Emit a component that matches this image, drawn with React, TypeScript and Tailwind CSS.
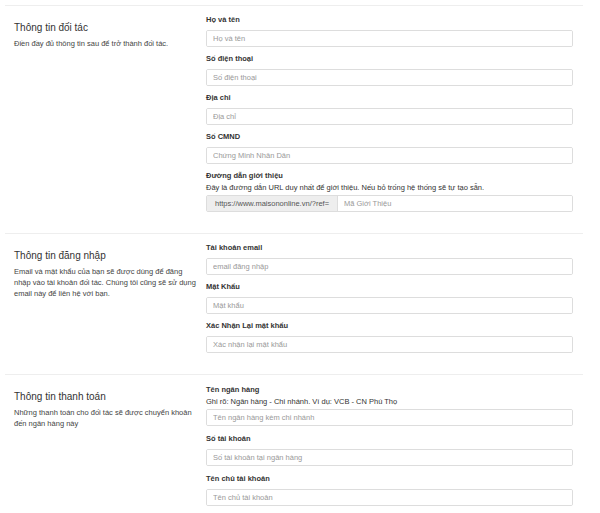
import React from "react";

type Field = {
  label: string;
  placeholder: string;
  help?: string;
  addon?: string;
};

type SectionProps = {
  title: string;
  desc: React.ReactNode;
  fields: Field[];
  wide?: boolean;
};

function FieldRow({ f }: { f: Field }) {
  return (
    <div className="flex flex-col">
      <div className="text-[7.5px] leading-[10px] font-bold text-[#333]">{f.label}</div>
      {f.help ? (
        <div className="mt-[2px] text-[7.5px] leading-[10px] text-[#333]">{f.help}</div>
      ) : null}
      <div
        className={
          f.help
            ? "mt-[2px] flex h-[17px] border border-[#ddd] rounded-[2px] overflow-hidden"
            : "mt-[5px] flex h-[17px] border border-[#ddd] rounded-[2px] overflow-hidden"
        }
      >
        {f.addon ? (
          <div className="flex items-center bg-[#eee] border-r border-[#ddd] px-[8px] text-[7.5px] text-[#555] whitespace-nowrap">
            {f.addon}
          </div>
        ) : null}
        <input
          className="flex-1 min-w-0 px-[6px] text-[7.5px] text-[#333] placeholder:text-[#999] outline-none bg-white"
          placeholder={f.placeholder}
        />
      </div>
    </div>
  );
}

function Section({ title, desc, fields, wide }: SectionProps) {
  return (
    <div className="flex w-[578px] border-t border-[#eee]">
      <div className="w-[201px] pl-[9px] pt-[15px]">
        <div className="text-[10px] leading-[14px] text-[#333]">{title}</div>
        <div className="mt-[3px] w-[182px] text-[7.5px] leading-[11px] text-[#444]">{desc}</div>
      </div>
      <div
        className={
          wide
            ? "w-[367px] pt-[10px] pb-[20px] flex flex-col gap-[8px]"
            : "w-[367px] pt-[9px] pb-[21px] flex flex-col gap-[7px]"
        }
      >
        {fields.map((f) => (
          <FieldRow key={f.label} f={f} />
        ))}
      </div>
    </div>
  );
}

export default function App() {
  return (
    <div className="w-[600px] h-[513px] overflow-hidden bg-white font-['Liberation_Sans',Arial,sans-serif]">
      <div className="pl-[5px] pt-[5px]">
        <Section
          title="Thông tin đối tác"
          desc="Điền đầy đủ thông tin sau để trở thành đối tác."
          fields={[
            { label: "Họ và tên", placeholder: "Họ và tên" },
            { label: "Số điện thoại", placeholder: "Số điện thoại" },
            { label: "Địa chỉ", placeholder: "Địa chỉ" },
            { label: "Số CMND", placeholder: "Chứng Minh Nhân Dân" },
            {
              label: "Đường dẫn giới thiệu",
              help: "Đây là đường dẫn URL duy nhất để giới thiệu. Nếu bỏ trống hệ thống sẽ tự tạo sẵn.",
              addon: "https://www.maisononline.vn/?ref=",
              placeholder: "Mã Giới Thiệu",
            },
          ]}
        />
        <Section
          title="Thông tin đăng nhập"
          desc="Email và mật khẩu của bạn sẽ được dùng để đăng nhập vào tài khoản đối tác. Chúng tôi cũng sẽ sử dụng email này để liên hệ với bạn."
          fields={[
            { label: "Tài khoản email", placeholder: "email đăng nhập" },
            { label: "Mật Khẩu", placeholder: "Mật khẩu" },
            { label: "Xác Nhận Lại mật khẩu", placeholder: "Xác nhận lại mật khẩu" },
          ]}
        />
        <Section
          title="Thông tin thanh toán"
          desc="Những thanh toán cho đối tác sẽ được chuyển khoản đến ngân hàng này"
          wide
          fields={[
            {
              label: "Tên ngân hàng",
              help: "Ghi rõ: Ngân hàng - Chi nhánh. Ví dụ: VCB - CN Phú Thọ",
              placeholder: "Tên ngân hàng kèm chi nhánh",
            },
            { label: "Số tài khoản", placeholder: "Số tài khoản tại ngân hàng" },
            { label: "Tên chủ tài khoản", placeholder: "Tên chủ tài khoản" },
          ]}
        />
      </div>
    </div>
  );
}
